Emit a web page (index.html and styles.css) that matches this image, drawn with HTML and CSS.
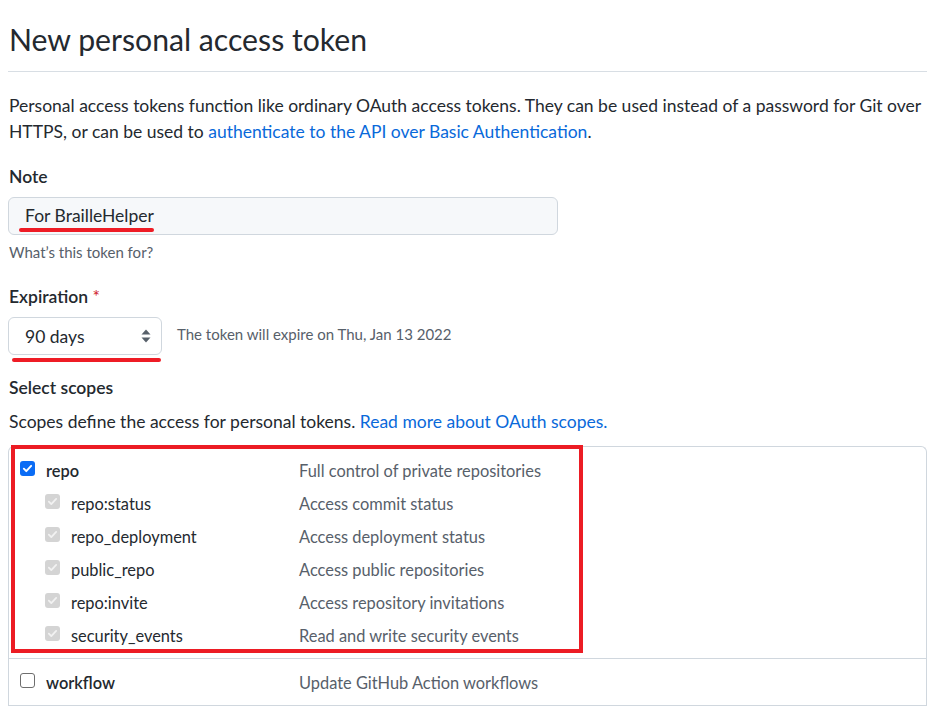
FILE: index.html
```html
<!DOCTYPE html>
<html lang="en">
<head>
<meta charset="utf-8">
<title>New personal access token</title>
<link rel="stylesheet" href="styles.css">
</head>
<body>
<div class="page">
  <h1 class="subhead">New personal access token</h1>
  <p class="intro"><span>Personal access tokens function like ordinary OAuth access tokens. They can be used instead of a password for Git over</span><br><span>HTTPS, or can be used to </span><a href="#">authenticate to the API over Basic Authentication</a><span>.</span></p>

  <div class="label">Note</div>
  <div class="input">
    <span class="input-text">For BrailleHelper</span>
    <span class="mark mark-note"></span>
  </div>
  <div class="hint">What’s this token for?</div>

  <div class="label label-exp">Expiration <span class="req">*</span></div>
  <div class="exp-row">
    <div class="select">
      <span class="select-text">90 days</span>
      <svg class="arrows" width="10" height="14" viewBox="0 0 10 14"><path d="M5 0.5L9.5 5.5H0.5Z" fill="#57606a"/><path d="M5 13.5L9.5 8.5H0.5Z" fill="#57606a"/></svg>
      <span class="mark mark-select"></span>
    </div>
    <span class="exp-note">The token will expire on Thu, Jan 13 2022</span>
  </div>

  <div class="label label-scopes">Select scopes</div>
  <p class="scopes-desc"><span>Scopes define the access for personal tokens. </span><a href="#">Read more about OAuth scopes.</a></p>

  <div class="scopes">
    <div class="group">
      <div class="row">
        <div class="cell-name"><span class="cb cb-on"><svg viewBox="0 0 16 16"><path d="M3.5 8.2l3 3 6-6.4" fill="none" stroke="#fff" stroke-width="2.4" stroke-linecap="round" stroke-linejoin="round"/></svg></span><b>repo</b></div>
        <div class="cell-desc">Full control of private repositories</div>
      </div>
      <div class="row sub">
        <div class="cell-name"><span class="cb cb-dis"><svg viewBox="0 0 16 16"><path d="M3.5 8.2l3 3 6-6.4" fill="none" stroke="#f2f2f2" stroke-width="2.2" stroke-linecap="round" stroke-linejoin="round"/></svg></span>repo:status</div>
        <div class="cell-desc">Access commit status</div>
      </div>
      <div class="row sub">
        <div class="cell-name"><span class="cb cb-dis"><svg viewBox="0 0 16 16"><path d="M3.5 8.2l3 3 6-6.4" fill="none" stroke="#f2f2f2" stroke-width="2.2" stroke-linecap="round" stroke-linejoin="round"/></svg></span>repo_deployment</div>
        <div class="cell-desc">Access deployment status</div>
      </div>
      <div class="row sub">
        <div class="cell-name"><span class="cb cb-dis"><svg viewBox="0 0 16 16"><path d="M3.5 8.2l3 3 6-6.4" fill="none" stroke="#f2f2f2" stroke-width="2.2" stroke-linecap="round" stroke-linejoin="round"/></svg></span>public_repo</div>
        <div class="cell-desc">Access public repositories</div>
      </div>
      <div class="row sub">
        <div class="cell-name"><span class="cb cb-dis"><svg viewBox="0 0 16 16"><path d="M3.5 8.2l3 3 6-6.4" fill="none" stroke="#f2f2f2" stroke-width="2.2" stroke-linecap="round" stroke-linejoin="round"/></svg></span>repo:invite</div>
        <div class="cell-desc">Access repository invitations</div>
      </div>
      <div class="row sub">
        <div class="cell-name"><span class="cb cb-dis"><svg viewBox="0 0 16 16"><path d="M3.5 8.2l3 3 6-6.4" fill="none" stroke="#f2f2f2" stroke-width="2.2" stroke-linecap="round" stroke-linejoin="round"/></svg></span>security_events</div>
        <div class="cell-desc">Read and write security events</div>
      </div>
    </div>
    <div class="group">
      <div class="row">
        <div class="cell-name"><span class="cb cb-off"></span><b>workflow</b></div>
        <div class="cell-desc">Update GitHub Action workflows</div>
      </div>
    </div>
    <div class="highlight"></div>
  </div>
</div>
</body>
</html>
```

FILE: styles.css
```css
* { box-sizing: border-box; }

body {
  margin: 0;
  background: #ffffff;
  color: #24292f;
  font-family: "Segoe UI", Lato, "Liberation Sans", sans-serif;
  font-size: 17.5px;
  line-height: 26px;
  overflow: hidden;
}

.page {
  padding: 20px 15px 0 8px;
}

.subhead {
  margin: 0;
  padding: 0 0 13px 1px;
  font-size: 30.2px;
  line-height: 38px;
  font-weight: 400;
  border-bottom: 1px solid #d8dee4;
}

a { color: #0969da; text-decoration: none; }

.intro {
  margin: 21px 0 0 1px;
  white-space: nowrap;
}

.label {
  margin: 19px 0 0 1px;
  font-weight: 600;
}

.label-exp { margin-top: 22px; }
.label-scopes { margin-top: 20px; }

.req { color: #cf222e; font-weight: 400; }

.input {
  position: relative;
  width: 550px;
  height: 38px;
  margin-top: 7px;
  padding: 0 16px;
  display: flex;
  align-items: center;
  background: #f6f8fa;
  border: 1px solid #d0d7de;
  border-radius: 6px;
}

.hint {
  margin: 7px 0 0 1px;
  font-size: 15px;
  line-height: 20px;
  color: #57606a;
}

.exp-row {
  margin-top: 7px;
  display: flex;
  align-items: center;
  gap: 15px;
}

.select {
  position: relative;
  width: 154px;
  height: 38px;
  padding: 0 10px 0 16px;
  display: flex;
  align-items: center;
  justify-content: space-between;
  background: #ffffff;
  border: 1px solid #d0d7de;
  border-radius: 6px;
}

.select-text { padding-top: 2px; }

.arrows { display: block; }

.exp-note {
  font-size: 15px;
  color: #57606a;
  margin-top: -4px;
}

.mark {
  position: absolute;
  height: 4px;
  border-radius: 2px;
  background: #ee1c25;
}

.mark-note { left: 10px; top: 30px; width: 135px; }
.mark-select { left: 3px; top: 40px; width: 149px; }

.scopes-desc {
  margin: 8px 0 0 1px;
}

.scopes {
  position: relative;
  margin-top: 11px;
  border: 1px solid #d0d7de;
  border-bottom: 0;
  border-radius: 6px 6px 0 0;
  font-size: 16.4px;
}

.group {
  padding: 7px 0 6px;
  border-bottom: 1px solid #d0d7de;
}

.row {
  display: grid;
  grid-template-columns: 290px 1fr;
  height: 33px;
  align-items: center;
}

.cell-name {
  display: flex;
  align-items: center;
  gap: 11px;
  padding-left: 11px;
}

.row.sub .cell-name { padding-left: 36px; }

.cell-name b { font-weight: 600; }

.cell-desc { color: #57606a; }

.cb {
  width: 15px;
  height: 15px;
  flex: none;
  border-radius: 3px;
  margin-top: -5px;
  display: inline-flex;
  align-items: center;
  justify-content: center;
}

.cb svg { width: 13px; height: 13px; }

.cb-on { background: #0b6cf5; }
.cb-dis { background: #d4d4d4; }
.cb-off { background: #fff; border: 1.5px solid #6e6e6e; }

.highlight {
  position: absolute;
  left: 2px;
  top: -2px;
  width: 572px;
  height: 208px;
  border: 4px solid #ec1c24;
}
```
